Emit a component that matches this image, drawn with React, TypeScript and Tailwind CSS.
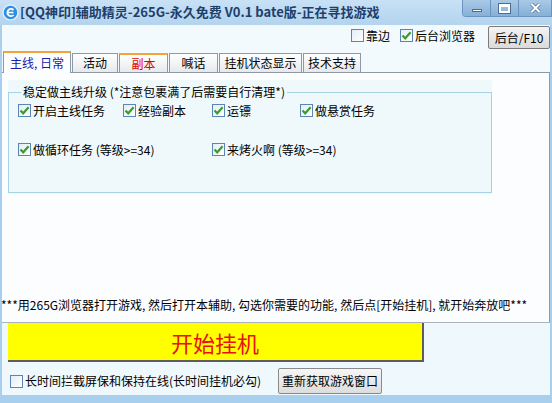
import React from "react";

const font = { fontFamily: '"Noto Sans CJK SC", "Noto Sans", sans-serif' };

function Check({ checked }: { checked?: boolean }) {
  return (
    <span className="w-[13px] h-[13px] border border-[#5a85b5] bg-gradient-to-br from-[#e4edf6] to-white flex items-center justify-center shrink-0">
      {checked && (
        <svg width="11" height="11" viewBox="0 0 11 11">
          <path d="M1.5 5.5 L4.2 8.3 L9.6 2.2" stroke="#3c9d2a" strokeWidth="2.2" fill="none" />
        </svg>
      )}
    </span>
  );
}

function Option({ label, checked }: { label: string; checked?: boolean }) {
  return (
    <label className="flex items-center gap-[2px] h-[13px] whitespace-nowrap">
      <Check checked={checked} />
      <span>{label}</span>
    </label>
  );
}

const tabs = [
  { label: "主线, 日常", w: "w-[68px]", active: true },
  { label: "活动", w: "w-[46px]" },
  { label: "副本", w: "w-[49px]", red: true },
  { label: "喊话", w: "w-[49px]" },
  { label: "挂机状态显示", w: "w-[83px]" },
  { label: "技术支持", w: "w-[58px]" },
];

export default function App() {
  return (
    <div
      className="w-[552px] h-[403px] flex flex-col bg-[#a9cfee] overflow-hidden text-[12px] text-black"
      style={font}
    >
      {/* title bar */}
      <div className="h-[25px] flex items-start bg-gradient-to-b from-[#c8e1f5] to-[#b3d3ee]">
        <svg width="17" height="17" viewBox="0 0 17 17" className="mt-[4px] ml-[2px]">
          <circle cx="8.5" cy="8.5" r="7.5" fill="#2f8de2" stroke="#dfeefb" strokeWidth="1.5" />
          <path d="M11.5 6 A3.6 3.6 0 1 0 11.6 11" stroke="white" strokeWidth="1.8" fill="none" />
          <path d="M6 8.5 H11.5" stroke="white" strokeWidth="1.6" />
        </svg>
        <span className="ml-[1px] mt-[3px] text-[13px] font-bold leading-[18px] text-[#1e3f6b] whitespace-nowrap">
          [QQ神印]辅助精灵-265G-永久免费 V0.1 bate版-正在寻找游戏
        </span>
        <div className="ml-auto flex h-[17px] border border-t-0 border-[#6a93bd] rounded-bl-[4px] overflow-hidden">
          <div className="w-[28px] flex items-center justify-center bg-gradient-to-b from-[#a9c9e6] to-[#86b0d8] border-r border-[#6a93bd]">
            <span className="w-[10px] h-[3px] bg-white border border-[#4b6d91] mt-[4px]" />
          </div>
          <div className="w-[28px] flex items-center justify-center bg-gradient-to-b from-[#a9c9e6] to-[#86b0d8] border-r border-[#6a93bd]">
            <span className="w-[11px] h-[9px] border-2 border-t-[3px] border-white outline outline-1 outline-[#4b6d91]" />
          </div>
          <div className="w-[32px] flex items-center justify-center bg-gradient-to-b from-[#a9c9e6] to-[#86b0d8]">
            <svg width="11" height="10" viewBox="0 0 11 10">
              <path d="M1.5 1 L9.5 9 M9.5 1 L1.5 9" stroke="#4b6d91" strokeWidth="3.4" />
              <path d="M1.5 1 L9.5 9 M9.5 1 L1.5 9" stroke="white" strokeWidth="2" />
            </svg>
          </div>
        </div>
      </div>

      {/* client */}
      <div className="mx-[2px] flex flex-col bg-[#f3fafd]">
        {/* top row */}
        <div className="h-[26px] flex items-start justify-end">
          <div className="mt-[4px]">
            <Option label="靠边" />
          </div>
          <div className="mt-[4px] ml-[10px]">
            <Option label="后台浏览器" checked />
          </div>
          <button className="ml-[13px] mt-[1px] w-[62px] h-[23px] border border-[#7b7b7b] rounded-[2px] bg-gradient-to-b from-[#f4f4f4] to-[#dadada] text-[12px]">
            后台/F10
          </button>
        </div>

        {/* tabs */}
        <div className="h-[21px] flex items-end pl-[1px] gap-[1px]">
          {tabs.map((t) =>
            t.active ? (
              <div
                key={t.label}
                className={`${t.w} h-[22px] -mb-[1px] relative z-10 border-x border-[#8d99a6] border-t-2 border-t-[#f2a43a] bg-[#fbfdff] flex items-center justify-center text-[#1a20a8] whitespace-nowrap`}
              >
                {t.label}
              </div>
            ) : (
              <div
                key={t.label}
                className={`${t.w} h-[19px] border border-b-0 border-[#8d99a6] ${
                  t.red ? "border-t-2 border-t-[#f2a43a] text-[#e00000]" : ""
                } bg-gradient-to-b from-white to-[#e6e9ec] flex items-center justify-center whitespace-nowrap`}
              >
                {t.label}
              </div>
            )
          )}
        </div>

        {/* tab panel */}
        <div className="h-[250px] border-t border-r border-[#8d99a6] bg-[#fbfdff] flex flex-col">
          <div className="mt-[7px] ml-[6px] w-[484px] h-[114px] bg-[#eff9fc] pt-[4px]">
            <fieldset className="h-[109px] border border-[#a6d2e6]">
              <legend className="ml-[12px] px-[2px] leading-[16px] whitespace-nowrap">
                稳定做主线升级 (*注意包裹满了后需要自行清理*)
              </legend>
              <div className="mt-[4px] pl-[9px] grid grid-cols-[105px_89px_88px_1fr] gap-y-[26px]">
                <Option label="开启主线任务" checked />
                <Option label="经验副本" checked />
                <Option label="运镖" checked />
                <Option label="做悬赏任务" checked />
                <div className="col-span-2">
                  <Option label="做循环任务 (等级>=34)" checked />
                </div>
                <div className="col-span-2">
                  <Option label="来烤火啊 (等级>=34)" checked />
                </div>
              </div>
            </fieldset>
          </div>
          <div className="mt-auto mb-[9px] -ml-[1px] leading-[16px] whitespace-nowrap">
            ***用265G浏览器打开游戏, 然后打开本辅助, 勾选你需要的功能, 然后点[开始挂机], 就开始奔放吧***
          </div>
        </div>

        {/* bottom */}
        <div className="h-[73px] border-t border-[#a9b3bc] bg-[#eff8fc] flex flex-col">
          <button className="ml-[6px] w-[416px] h-[39px] bg-[#ffff00] border-r-2 border-b-2 border-[#5e5e5e] text-[#e81010] text-[22px] leading-none">
            开始挂机
          </button>
          <div className="mt-[6px] h-[26px] flex items-center">
            <div className="ml-[8px] w-[268px]">
              <Option label="长时间拦截屏保和保持在线(长时间挂机必勾)" />
            </div>
            <button className="w-[104px] h-[26px] border border-[#8a8a8a] rounded-[2px] bg-gradient-to-b from-[#f6f6f6] to-[#dddddd] text-[12px] whitespace-nowrap">
              重新获取游戏窗口
            </button>
          </div>
        </div>
      </div>
    </div>
  );
}
